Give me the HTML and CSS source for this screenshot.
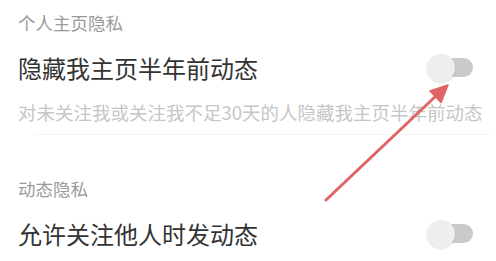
FILE: index.html
```html
<!DOCTYPE html>
<html lang="zh-CN">
<head>
<meta charset="utf-8">
<link rel="stylesheet" href="styles.css">
</head>
<body>
<div class="page">
  <div class="group-title">个人主页隐私</div>
  <div class="row">
    <span class="row-title">隐藏我主页半年前动态</span>
    <span class="toggle"><span class="track"></span><span class="thumb"></span></span>
  </div>
  <div class="desc">对未关注我或关注我不足30天的人隐藏我主页半年前动态</div>
  <div class="divider"></div>
  <div class="group-title second">动态隐私</div>
  <div class="row">
    <span class="row-title">允许关注他人时发动态</span>
    <span class="toggle"><span class="track"></span><span class="thumb"></span></span>
  </div>
  <svg class="annotation" width="496" height="261" viewBox="0 0 496 261">
    <line x1="326" y1="200" x2="438" y2="94" stroke="#e06464" stroke-width="3" stroke-linecap="round"/>
    <polygon points="448,85 441,102.5 430,91" fill="#e06464" stroke="#e06464" stroke-width="1.5" stroke-linejoin="round"/>
  </svg>
</div>
</body>
</html>
```

FILE: styles.css
```css
html, body {
  margin: 0;
  padding: 0;
  background: #ffffff;
}
body {
  width: 496px;
  height: 261px;
  overflow: hidden;
  font-family: "Noto Sans CJK SC", "Noto Sans", sans-serif;
}
.page {
  position: relative;
  width: 496px;
  height: 261px;
}
.group-title {
  height: 45px;
  display: flex;
  align-items: center;
  padding-left: 18px;
  font-size: 17.5px;
  color: #9a9a9a;
}
.group-title.second {
  margin-top: 31px;
}
.row {
  height: 45px;
  display: flex;
  align-items: center;
  justify-content: space-between;
  padding-left: 18px;
  padding-right: 23px;
}
.row-title {
  font-size: 24px;
  color: #333333;
}
.desc {
  height: 44px;
  display: flex;
  align-items: center;
  padding-left: 18px;
  font-size: 18.5px;
  color: #c6c6c6;
  white-space: nowrap;
}
.divider {
  height: 1px;
  margin-left: 34px;
  margin-right: 6px;
  background: #f4f4f4;
}
.toggle {
  position: relative;
  width: 46px;
  height: 28px;
  flex: none;
}
.track {
  position: absolute;
  right: 0;
  top: 4.5px;
  width: 40px;
  height: 19px;
  border-radius: 10px;
  background: #cacaca;
}
.thumb {
  position: absolute;
  left: 0;
  top: 0;
  width: 28px;
  height: 28px;
  border-radius: 50%;
  background: #eeeeee;
  box-shadow: 0 1px 2px rgba(0, 0, 0, 0.12);
}
.annotation {
  position: absolute;
  left: 0;
  top: 0;
  pointer-events: none;
}
```
